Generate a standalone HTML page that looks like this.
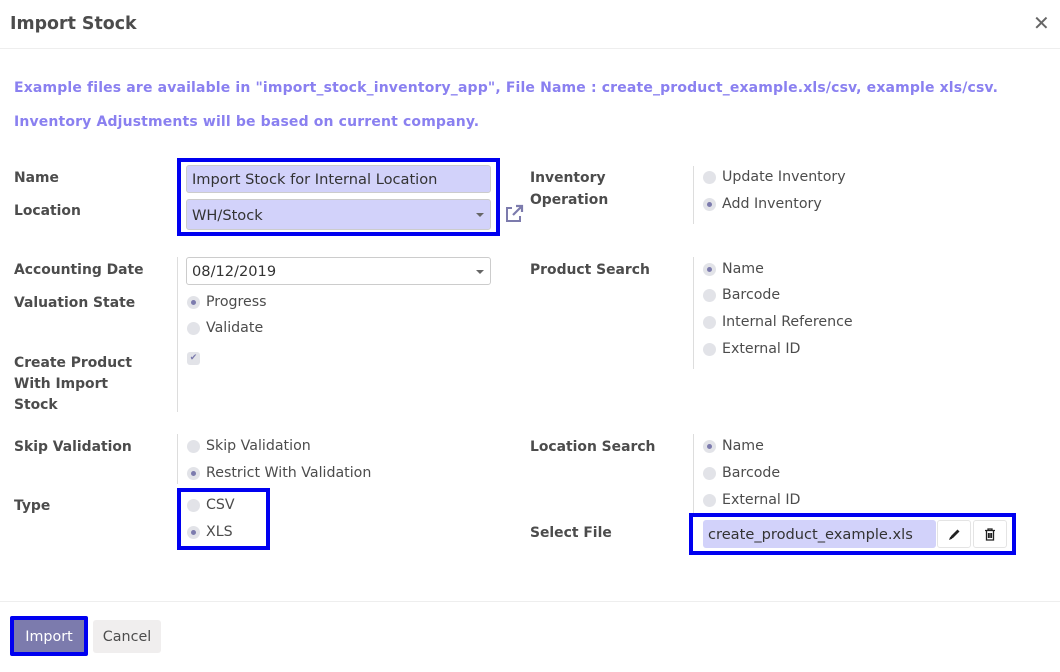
<!DOCTYPE html>
<html><head><meta charset="utf-8"><style>
*{box-sizing:border-box;margin:0;padding:0}
body{width:1060px;height:672px;background:#fff;font-family:"DejaVu Sans","Liberation Sans",sans-serif;font-size:14.2px;color:#4c4c4c;position:relative;overflow:hidden}
.a{position:absolute;white-space:nowrap;margin-top:2px}
.b{font-weight:bold;color:#4c4c4c;font-size:13.9px}
.p{color:#8a80f0;font-weight:bold;font-size:14px;letter-spacing:0.15px}
.r{position:absolute;width:13px;height:13px;border-radius:50%;background:#e2e3e8;margin-top:1px}
.r.on::after{content:"";position:absolute;left:4px;top:4px;width:5px;height:5px;border-radius:50%;background:#7c7bad}
.inp{position:absolute;background:#d2d2fa;border:1px solid #ccc;border-radius:3px;padding-left:5px;color:#333;font-size:14.6px}
.car{position:absolute;right:6px;top:13px;border-left:4px solid transparent;border-right:4px solid transparent;border-top:4px solid #666}
.vl{position:absolute;width:1px;background:#ddd}
.box{position:absolute;border:4px solid #0000f0}
.ln{margin-top:0}
</style></head><body>
<div class="a b" style="left:10px;top:12px;font-size:17.4px">Import Stock</div>
<div class="a" style="left:1033px;top:9px;font-size:20px;color:#666;font-weight:bold">✕</div>
<div class="a ln" style="left:0;top:48px;width:1060px;height:1px;background:#eee"></div>
<div class="a p" style="left:14px;top:78px">Example files are available in "import_stock_inventory_app", File Name : create_product_example.xls/csv, example xls/csv.</div>
<div class="a p" style="left:14px;top:112px">Inventory Adjustments will be based on current company.</div>

<div class="a b" style="left:14px;top:168px">Name</div>
<div class="a b" style="left:14px;top:201px">Location</div>
<div class="box" style="left:177px;top:158px;width:323px;height:78px"></div>
<div class="inp" style="left:186px;top:165px;width:305px;height:28px;line-height:28px">Import Stock for Internal Location</div>
<div class="inp" style="left:186px;top:199px;width:305px;height:31px;line-height:31px">WH/Stock<span class="car"></span></div>
<svg class="a ln" style="left:503px;top:203px" width="22" height="22" viewBox="0 0 22 22"><path d="M9 5H4v13h13v-5" fill="none" stroke="#7c7bad" stroke-width="2"/><path d="M10 12L19 3M13 3h6v6" fill="none" stroke="#7c7bad" stroke-width="2.2"/></svg>

<div class="a b" style="left:530px;top:168px">Inventory</div>
<div class="a b" style="left:530px;top:190px">Operation</div>
<div class="vl" style="left:693px;top:166px;height:58px"></div>
<div class="r" style="left:703px;top:170px"></div><div class="a" style="left:722px;top:167px">Update Inventory</div>
<div class="r on" style="left:703px;top:197px"></div><div class="a" style="left:722px;top:194px">Add Inventory</div>

<div class="a b" style="left:14px;top:260px">Accounting Date</div>
<div class="a b" style="left:14px;top:293px">Valuation State</div>
<div class="a b" style="left:14px;top:351px;line-height:21px;white-space:normal;width:130px">Create Product With Import Stock</div>
<div class="vl" style="left:177px;top:257px;height:155px"></div>
<div class="inp" style="left:186px;top:257px;width:305px;height:28px;line-height:28px;background:#fff">08/12/2019<span class="car" style="top:12px"></span></div>
<div class="r on" style="left:187px;top:295px"></div><div class="a" style="left:206px;top:292px">Progress</div>
<div class="r" style="left:187px;top:321px"></div><div class="a" style="left:206px;top:318px">Validate</div>
<div class="a ln" style="left:187px;top:352px;width:13px;height:13px;border-radius:3px;background:#e2e3e8;font-size:9px;color:#7c7bad;text-align:center;line-height:13px">✔</div>

<div class="a b" style="left:530px;top:260px">Product Search</div>
<div class="vl" style="left:693px;top:257px;height:112px"></div>
<div class="r on" style="left:703px;top:262px"></div><div class="a" style="left:722px;top:259px">Name</div>
<div class="r" style="left:703px;top:288px"></div><div class="a" style="left:722px;top:285px">Barcode</div>
<div class="r" style="left:703px;top:315px"></div><div class="a" style="left:722px;top:312px">Internal Reference</div>
<div class="r" style="left:703px;top:342px"></div><div class="a" style="left:722px;top:339px">External ID</div>

<div class="a b" style="left:14px;top:437px">Skip Validation</div>
<div class="vl" style="left:177px;top:434px;height:50px"></div>
<div class="r" style="left:187px;top:439px"></div><div class="a" style="left:206px;top:436px">Skip Validation</div>
<div class="r on" style="left:187px;top:466px"></div><div class="a" style="left:206px;top:463px">Restrict With Validation</div>
<div class="a b" style="left:14px;top:496px">Type</div>
<div class="box" style="left:177px;top:488px;width:93px;height:62px"></div>
<div class="r" style="left:187px;top:498px"></div><div class="a" style="left:206px;top:495px">CSV</div>
<div class="r on" style="left:187px;top:525px"></div><div class="a" style="left:206px;top:522px">XLS</div>

<div class="a b" style="left:530px;top:437px">Location Search</div>
<div class="vl" style="left:693px;top:434px;height:80px"></div>
<div class="r on" style="left:703px;top:439px"></div><div class="a" style="left:722px;top:436px">Name</div>
<div class="r" style="left:703px;top:466px"></div><div class="a" style="left:722px;top:463px">Barcode</div>
<div class="r" style="left:703px;top:493px"></div><div class="a" style="left:722px;top:490px">External ID</div>
<div class="a b" style="left:530px;top:523px">Select File</div>
<div class="box" style="left:689px;top:513px;width:327px;height:42px"></div>
<div class="inp" style="left:703px;top:520px;width:233px;height:28px;line-height:30px;border:none">create_product_example.xls</div>
<div class="a ln" style="left:937px;top:520px;width:34px;height:28px;border:1px solid #e4e4e4;border-radius:3px"><svg style="position:absolute;left:10px;top:7px" width="13" height="13" viewBox="0 0 13 13"><path d="M2 11l1-3 6.5-6.5 2 2L5 10z" fill="#222"/><path d="M1 12l1.2-3.2 2 2z" fill="#222"/></svg></div>
<div class="a ln" style="left:973px;top:520px;width:34px;height:28px;border:1px solid #e4e4e4;border-radius:3px"><svg style="position:absolute;left:10px;top:7px" width="12" height="13" viewBox="0 0 12 13"><path d="M1 2.5h10M4 2.5V1h4v1.5M2.5 3v9h7V3M4.5 5v5M6 5v5M7.5 5v5" fill="none" stroke="#222" stroke-width="1.3"/></svg></div>

<div class="a ln" style="left:0;top:601px;width:1060px;height:1px;background:#eee"></div>
<div class="a ln" style="left:10px;top:616px;width:78px;height:40px;background:#7c7bad;border:4px solid #0000f0;border-radius:2px;color:#fff;text-align:center;line-height:34px;font-size:14.3px">Import</div>
<div class="a ln" style="left:93px;top:620px;width:68px;height:33px;background:#f0eeee;border-radius:3px;color:#4c4c4c;text-align:center;line-height:35px;font-size:14.3px">Cancel</div>
</body></html>
